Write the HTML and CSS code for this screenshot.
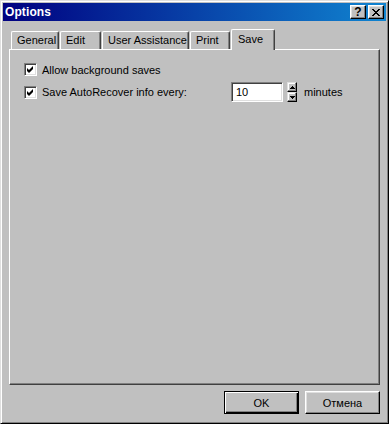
FILE: index.html
```html
<!DOCTYPE html>
<html>
<head>
<meta charset="utf-8">
<link rel="stylesheet" href="styles.css">
</head>
<body>
<div class="window">
  <div class="titlebar">
    <span class="title">Options</span>
    <span class="tb-btn help">?</span>
    <span class="tb-btn close"><svg width="8" height="7" viewBox="0 0 8 7"><path d="M0 0h2v1h1v1h2V1h1V0h2v1H7v1H6v1H5v1h1v1h1v1h1v1H6V6H5V5H3v1H2v1H0V6h1V5h1V4h1V3H2V2H1V1H0z" fill="#000"/></svg></span>
  </div>
  <div class="tabs">
    <div class="tab w-general">General</div>
    <div class="tab w-edit">Edit</div>
    <div class="tab w-ua">User Assistance</div>
    <div class="tab w-print">Print</div>
    <div class="tab tab-active w-save">Save</div>
  </div>
  <div class="panel">
    <div class="row row1">
      <span class="check"><svg width="7" height="7" viewBox="0 0 7 7"><path d="M6 0v3L3 6 2 7 0 5V2l2 2z" fill="#000"/></svg></span>
      <span class="label">Allow background saves</span>
    </div>
    <div class="row row2">
      <span class="check"><svg width="7" height="7" viewBox="0 0 7 7"><path d="M6 0v3L3 6 2 7 0 5V2l2 2z" fill="#000"/></svg></span>
      <span class="label label-wide">Save AutoRecover info every:</span>
      <span class="field">10</span>
      <span class="spin">
        <span class="spin-btn"><svg width="5" height="3" viewBox="0 0 5 3"><path d="M2 0h1v1h1v1h1v1H0V2h1V1h1z" fill="#000"/></svg></span>
        <span class="spin-btn"><svg width="5" height="3" viewBox="0 0 5 3"><path d="M0 0h5v1H4v1H3v1H2V2H1V1H0z" fill="#000"/></svg></span>
      </span>
      <span class="label units">minutes</span>
    </div>
  </div>
  <div class="buttons">
    <div class="btn btn-default"><span>OK</span></div>
    <div class="btn"><span>Отмена</span></div>
  </div>
</div>
</body>
</html>
```
FILE: styles.css
```css
html, body {
  margin: 0;
  padding: 0;
  background: #c0c0c0;
}
body {
  font-family: "Liberation Sans", Arial, sans-serif;
  font-size: 11px;
  color: #000;
}
.window {
  width: 389px;
  height: 424px;
  box-sizing: border-box;
  background: #c0c0c0;
  border: 1px solid;
  border-color: #dfdfdf #000 #000 #dfdfdf;
  box-shadow: inset 1px 1px #fff, inset -1px -1px #808080;
  padding: 2px;
  display: flex;
  flex-direction: column;
}
.titlebar {
  height: 18px;
  display: flex;
  align-items: center;
  background: linear-gradient(to right, #000080, #1084d0);
  padding-right: 2px;
}
.title {
  flex: 1;
  color: #fff;
  font-weight: bold;
  font-size: 12px;
  padding-left: 2px;
  letter-spacing: 0.1px;
}
.tb-btn {
  width: 16px;
  height: 14px;
  box-sizing: border-box;
  background: #c0c0c0;
  border: 1px solid;
  border-color: #fff #000 #000 #fff;
  box-shadow: inset -1px -1px #808080, inset 1px 1px #dfdfdf;
  display: flex;
  align-items: center;
  justify-content: center;
}
.help {
  margin-right: 2px;
  font-weight: bold;
  font-size: 12px;
  line-height: 12px;
  padding-bottom: 1px;
}
.close svg { display: block; margin-left: -1px; }
.tabs {
  margin: 8px 6px 0 6px;
  height: 20px;
  display: flex;
  align-items: flex-end;
  padding-left: 2px;
}
.tab {
  height: 18px;
  box-sizing: border-box;
  border-left: 1px solid #fff;
  border-top: 1px solid #fff;
  border-right: 1px solid #404040;
  box-shadow: inset -1px 0 #808080;
  border-top-left-radius: 2px;
  border-top-right-radius: 2px;
  padding-left: 5px;
  padding-top: 2px;
  margin-right: 1px;
  white-space: nowrap;
}
.tab-active {
  height: 21px;
  margin-bottom: -1px;
  position: relative;
  z-index: 1;
  background: #c0c0c0;
  padding-left: 6px;
  padding-top: 3px;
}
.w-general { width: 48px; }
.w-edit { width: 41px; }
.w-ua { width: 87px; }
.w-print { width: 40px; }
.w-save { width: 44px; }
.panel {
  flex: 1;
  margin: 0 6px;
  border: 1px solid;
  border-color: #fff #404040 #404040 #fff;
  box-shadow: inset -1px -1px #808080;
  padding: 13px 14px;
  display: flex;
  flex-direction: column;
}
.row {
  display: flex;
  align-items: center;
}
.row1 { height: 13px; }
.row2 { height: 20px; margin-top: 6px; }
.check {
  width: 13px;
  height: 13px;
  box-sizing: border-box;
  background: #fff;
  border: 1px solid;
  border-color: #808080 #fff #fff #808080;
  box-shadow: inset 1px 1px #404040, inset -1px -1px #dfdfdf;
  display: flex;
  align-items: center;
  justify-content: center;
  flex: none;
}
.check svg { display: block; }
.label { margin-left: 5px; white-space: nowrap; }
.label-wide { width: 189px; flex: none; }
.field {
  width: 52px;
  height: 20px;
  box-sizing: border-box;
  background: #fff;
  border: 1px solid;
  border-color: #808080 #fff #fff #808080;
  box-shadow: inset 1px 1px #404040, inset -1px -1px #dfdfdf;
  padding: 3px 0 0 4px;
  font-size: 11px;
  color: #000;
}
.spin {
  margin-left: 4px;
  width: 10px;
  height: 20px;
  display: flex;
  flex-direction: column;
}
.spin-btn {
  flex: 1;
  box-sizing: border-box;
  background: #c0c0c0;
  border: 1px solid;
  border-color: #dfdfdf #000 #000 #dfdfdf;
  box-shadow: inset -1px -1px #808080, inset 1px 1px #fff;
  display: flex;
  align-items: center;
  justify-content: center;
}
.spin-btn svg { display: block; }
.units { margin-left: 7px; }
.buttons {
  display: flex;
  justify-content: flex-end;
  padding: 6px 6px 7px 0;
  gap: 6px;
}
.btn {
  width: 75px;
  height: 23px;
  box-sizing: border-box;
  background: #c0c0c0;
  border: 1px solid;
  border-color: #fff #000 #000 #fff;
  box-shadow: inset -1px -1px #808080, inset 1px 1px #dfdfdf;
  display: flex;
  align-items: center;
  justify-content: center;
}
.btn-default {
  border: 1px solid #000;
  box-shadow: inset 1px 1px #fff, inset -1px -1px #000, inset -2px -2px #808080;
}
```
